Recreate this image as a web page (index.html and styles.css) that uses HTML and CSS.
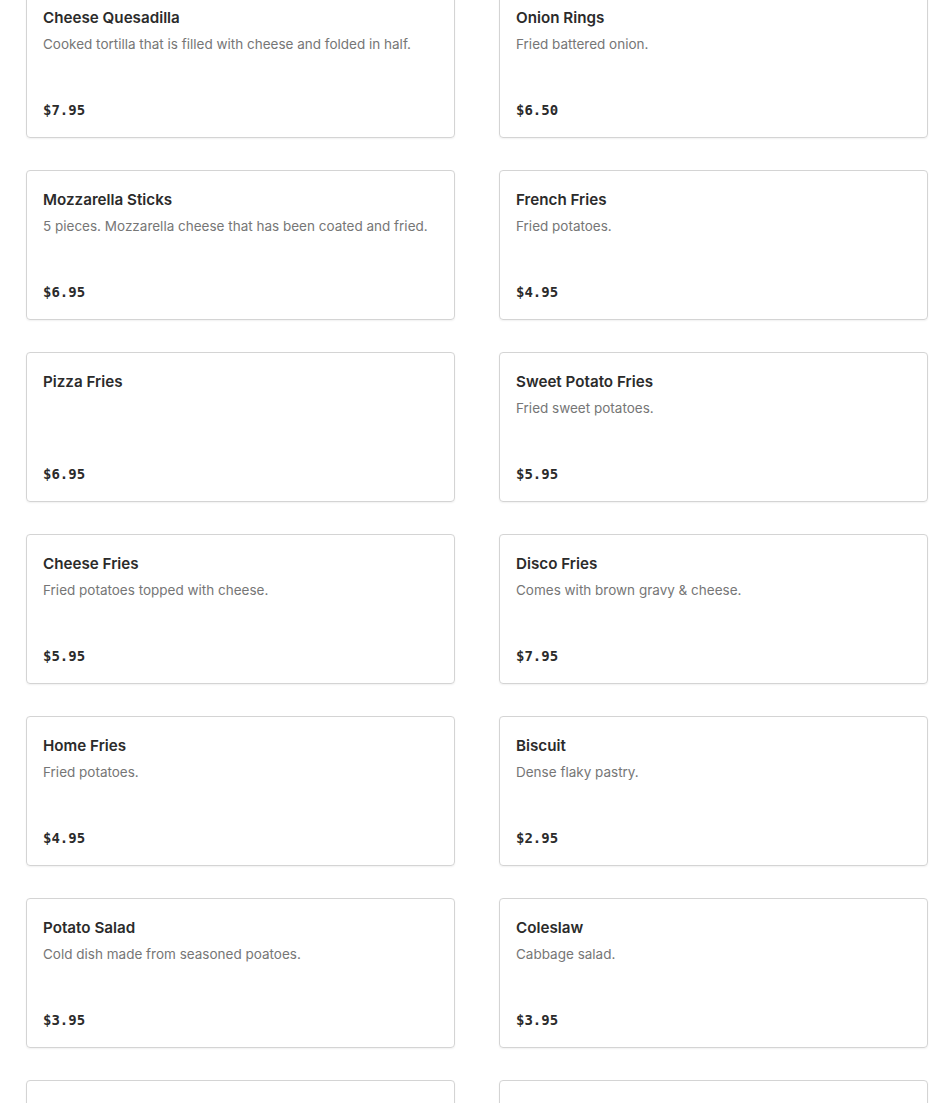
FILE: index.html
```html
<!DOCTYPE html>
<html lang="en">
<head>
<meta charset="utf-8">
<title>Menu</title>
<link rel="stylesheet" href="styles.css">
</head>
<body>
<main class="menu">
  <div class="card"><h3 class="title">Cheese Quesadilla</h3><p class="desc">Cooked tortilla that is filled with cheese and folded in half.</p><span class="price">$7.95</span></div>
  <div class="card"><h3 class="title">Onion Rings</h3><p class="desc">Fried battered onion.</p><span class="price">$6.50</span></div>
  <div class="card"><h3 class="title">Mozzarella Sticks</h3><p class="desc">5 pieces. Mozzarella cheese that has been coated and fried.</p><span class="price">$6.95</span></div>
  <div class="card"><h3 class="title">French Fries</h3><p class="desc">Fried potatoes.</p><span class="price">$4.95</span></div>
  <div class="card"><h3 class="title">Pizza Fries</h3><span class="price">$6.95</span></div>
  <div class="card"><h3 class="title">Sweet Potato Fries</h3><p class="desc">Fried sweet potatoes.</p><span class="price">$5.95</span></div>
  <div class="card"><h3 class="title">Cheese Fries</h3><p class="desc">Fried potatoes topped with cheese.</p><span class="price">$5.95</span></div>
  <div class="card"><h3 class="title">Disco Fries</h3><p class="desc">Comes with brown gravy &amp; cheese.</p><span class="price">$7.95</span></div>
  <div class="card"><h3 class="title">Home Fries</h3><p class="desc">Fried potatoes.</p><span class="price">$4.95</span></div>
  <div class="card"><h3 class="title">Biscuit</h3><p class="desc">Dense flaky pastry.</p><span class="price">$2.95</span></div>
  <div class="card"><h3 class="title">Potato Salad</h3><p class="desc">Cold dish made from seasoned poatoes.</p><span class="price">$3.95</span></div>
  <div class="card"><h3 class="title">Coleslaw</h3><p class="desc">Cabbage salad.</p><span class="price">$3.95</span></div>
  <div class="card"><h3 class="title">Macaroni Salad</h3><p class="desc">Pasta salad.</p><span class="price">$3.95</span></div>
  <div class="card"><h3 class="title">Side Salad</h3><p class="desc">Fresh greens.</p><span class="price">$3.95</span></div>
</main>
</body>
</html>
```
FILE: styles.css
```css
html, body {
  margin: 0;
  padding: 0;
  background: #ffffff;
}
body {
  font-family: "Inter", "Liberation Sans", sans-serif;
  color: #2b2b2b;
  overflow: hidden;
}
.menu {
  display: grid;
  grid-template-columns: 429px 429px;
  column-gap: 44px;
  row-gap: 32px;
  padding: 0 22px 0 26px;
  margin-top: -12px;
}
.card {
  box-sizing: border-box;
  height: 150px;
  border: 1px solid #d4d4d4;
  border-radius: 4px;
  box-shadow: 0 1px 2px rgba(0, 0, 0, 0.06);
  padding: 18px 16px 16px 16px;
  display: flex;
  flex-direction: column;
}
.title {
  margin: 0;
  font-size: 15.2px;
  line-height: 22px;
  font-weight: 600;
  color: #2b2b2b;
  white-space: nowrap;
}
.desc {
  margin: 4px 0 0;
  font-size: 13.5px;
  line-height: 22px;
  color: #767676;
  white-space: nowrap;
}
.price {
  margin-top: auto;
  font-family: "DejaVu Sans Mono", monospace;
  font-weight: bold;
  font-size: 14px;
  line-height: 22px;
  color: #2b2b2b;
}
```
